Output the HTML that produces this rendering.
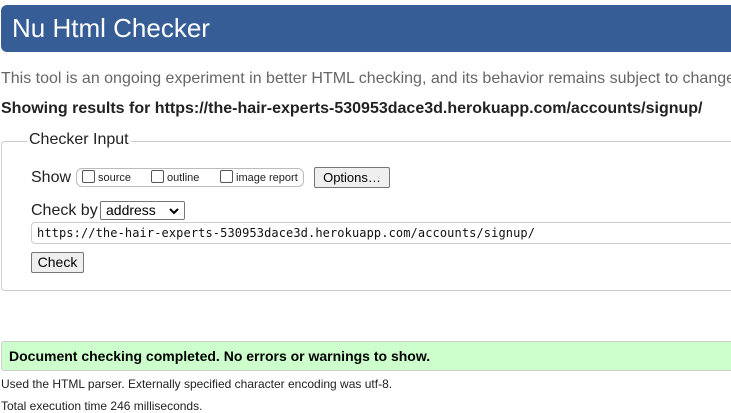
<!DOCTYPE html>
<html><head><style>
*{margin:0;padding:0;box-sizing:border-box}
body{width:731px;height:411px;overflow:hidden;background:#fff;font-family:"Liberation Sans",Arial,sans-serif;position:relative;color:#000}
.a{position:absolute;white-space:nowrap}
.cb{display:inline-block;width:13px;height:13px;border:1px solid #555;border-radius:2px;background:#fff;vertical-align:-2px;margin-right:3px}
.btn{position:absolute;background:#efefef;border:1px solid #767676;border-radius:2px;font-size:13px;text-align:center}
</style></head><body>
<div class="a" style="left:1px;top:5px;width:740px;height:47px;background:#365d95;border-radius:6px 0 0 6px"></div>
<div class="a" style="left:12px;top:13px;font-size:26px;color:#fff">Nu Html Checker</div>
<div class="a" style="left:1px;top:70px;font-size:16px;color:#666">This tool is an ongoing experiment in better HTML checking, and its behavior remains subject to change</div>
<div class="a" style="left:1px;top:100px;font-size:16px;font-weight:bold;color:#222">Showing results for https://the-hair-experts-530953dace3d.herokuapp.com/accounts/signup/</div>
<div class="a" style="left:1px;top:141px;width:740px;height:150px;border:1px solid #ccc;border-radius:4px 0 0 4px"></div>
<div class="a" style="left:27px;top:131px;font-size:16px;background:#fff;padding:0 2px;color:#222">Checker Input</div>
<div class="a" style="left:31px;top:169px;font-size:16px;color:#222">Show</div>
<div class="a" style="left:76px;top:168px;width:228px;height:19px;border:1px solid #bbb;border-radius:6px"></div>
<div class="a" style="left:82px;top:170px;font-size:11px;color:#222"><span class="cb"></span>source</div>
<div class="a" style="left:151px;top:170px;font-size:11px;color:#222"><span class="cb"></span>outline</div>
<div class="a" style="left:220px;top:170px;font-size:11px;color:#222"><span class="cb"></span>image report</div>
<div class="btn" style="left:314px;top:167px;width:76px;height:21px;line-height:19px">Options…</div>
<div class="a" style="left:31px;top:202px;font-size:16px;color:#222">Check by</div>
<div class="a" style="left:100px;top:201px;width:85px;height:19px;border:1px solid #767676;border-radius:2px;font-size:14px;line-height:17px;padding-left:5px">address<svg style="position:absolute;right:5px;top:6px" width="10" height="7" viewBox="0 0 10 7"><path d="M1 1l4 4 4-4" fill="none" stroke="#000" stroke-width="2"/></svg></div>
<div class="a" style="left:31px;top:222px;width:720px;height:22px;border:1px solid #ccc;border-radius:4px;font-family:'DejaVu Sans Mono','Liberation Mono',monospace;font-size:12px;letter-spacing:0.1px;line-height:21px;padding-left:5px;color:#111">https://the-hair-experts-530953dace3d.herokuapp.com/accounts/signup/</div>
<div class="btn" style="left:31px;top:252px;width:53px;height:21px;line-height:19px;font-size:14px">Check</div>
<div class="a" style="left:1px;top:341px;width:740px;height:30px;background:#ccffcc;border:1px solid #ccc;border-radius:3px 0 0 3px"></div>
<div class="a" style="left:9px;top:348px;font-size:14px;font-weight:bold">Document checking completed. No errors or warnings to show.</div>
<div class="a" style="left:1px;top:377px;font-size:12px;color:#222">Used the HTML parser. Externally specified character encoding was utf-8.</div>
<div class="a" style="left:1px;top:399px;font-size:12px;color:#222">Total execution time 246 milliseconds.</div>
</body></html>
